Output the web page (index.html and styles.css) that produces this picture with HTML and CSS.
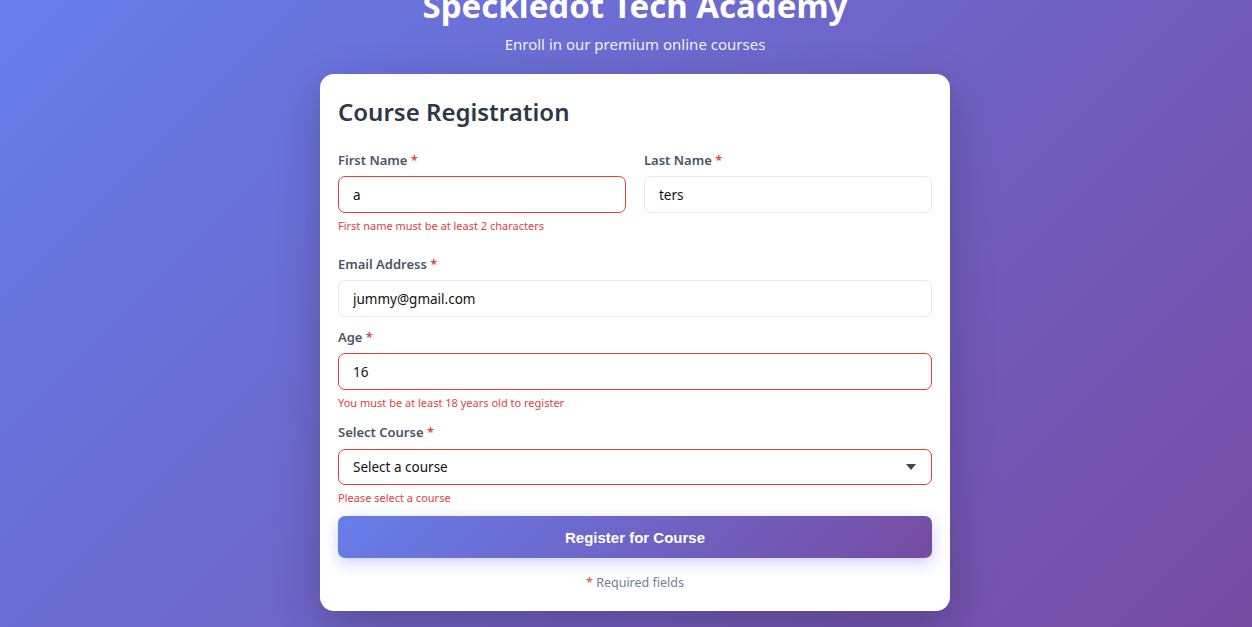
FILE: index.html
```html
<!DOCTYPE html>
<html lang="en">
<head>
<meta charset="utf-8">
<title>Speckledot Tech Academy</title>
<link rel="stylesheet" href="styles.css">
</head>
<body>
<div class="page">
  <header class="hero">
    <h1 class="hero-title">Speckledot Tech Academy</h1>
    <p class="hero-sub">Enroll in our premium online courses</p>
  </header>
  <main class="card">
    <h2 class="card-title">Course Registration</h2>
    <form class="form">
      <div class="form-row">
        <div class="field">
          <label class="label">First Name <span class="req">*</span></label>
          <input class="input input-error" type="text" value="a">
          <div class="error">First name must be at least 2 characters</div>
        </div>
        <div class="field">
          <label class="label">Last Name <span class="req">*</span></label>
          <input class="input" type="text" value="ters">
        </div>
      </div>
      <div class="field">
        <label class="label">Email Address <span class="req">*</span></label>
        <input class="input" type="email" value="jummy@gmail.com">
      </div>
      <div class="field">
        <label class="label">Age <span class="req">*</span></label>
        <input class="input input-error" type="text" value="16">
        <div class="error">You must be at least 18 years old to register</div>
      </div>
      <div class="field">
        <label class="label label-select">Select Course <span class="req">*</span></label>
        <div class="select-wrap">
          <select class="input select input-error">
            <option>Select a course</option>
          </select>
          <svg class="select-arrow" width="10" height="6" viewBox="0 0 10 6"><path d="M0 0h10L5 6z" fill="#444"/></svg>
        </div>
        <div class="error">Please select a course</div>
      </div>
      <button class="btn" type="button">Register for Course</button>
      <p class="note"><span class="req">*</span> Required fields</p>
    </form>
  </main>
</div>
</body>
</html>
```
FILE: styles.css
```css
* { box-sizing: border-box; }
html, body { margin: 0; padding: 0; }
body {
  font-family: "Noto Sans", "Open Sans", sans-serif;
  background: linear-gradient(135deg, #667eea 0%, #764ba2 100%);
  min-height: 627px;
  overflow: hidden;
}
.page {
  display: flex;
  flex-direction: column;
  align-items: center;
  margin-top: -16px;
  padding-left: 18px;
}
.hero { text-align: center; color: #fff; }
.hero-title {
  margin: 0;
  font-size: 33px;
  line-height: 44px;
  font-weight: 700;
}
.hero-sub {
  margin: 6px 0 0;
  font-size: 15px;
  line-height: 20px;
  color: rgba(255,255,255,0.92);
}
.card {
  margin-top: 20px;
  width: 630px;
  background: #fff;
  border-radius: 14px;
  padding: 22px 18px 19px;
  box-shadow: 0 15px 45px rgba(0,0,0,0.22);
}
.card-title {
  margin: 0 0 22px;
  font-size: 24px;
  line-height: 32px;
  font-weight: 600;
  color: #2d3748;
}
.form { display: flex; flex-direction: column; }
.form-row {
  display: grid;
  grid-template-columns: 1fr 1fr;
  gap: 18px;
  margin-bottom: 10px;
}
.field { display: flex; flex-direction: column; margin-bottom: 10px; }
.label {
  font-size: 13px;
  line-height: 20px;
  font-weight: 600;
  color: #4a5568;
  margin-bottom: 6px;
}
.label-select { margin-top: 1px; margin-bottom: 7px; }
.req { color: #e53e3e; }
.input {
  height: 37px;
  border: 1px solid #e2e8f0;
  border-radius: 7px;
  padding: 0 14px;
  font-family: inherit;
  font-size: 13.5px;
  color: #111;
  background: #fff;
  width: 100%;
}
.input-error { border-color: #e53e3e; }
.error {
  margin-top: 5px;
  font-size: 11px;
  line-height: 16px;
  color: #e53e3e;
}
.select-wrap { position: relative; }
.select { appearance: none; -webkit-appearance: none; display: block; height: 36px; }
.select-arrow { position: absolute; right: 16px; top: 15px; }
.btn {
  height: 42px;
  border: none;
  border-radius: 7px;
  background: linear-gradient(135deg, #667eea 0%, #764ba2 100%);
  color: #fff;
  font-family: "Liberation Sans", Arial, sans-serif;
  font-weight: 700;
  font-size: 15px;
  box-shadow: 0 5px 15px rgba(102,126,234,0.35);
}
.note {
  margin: 16px 0 0;
  text-align: center;
  font-size: 12.5px;
  line-height: 18px;
  color: #718096;
}
```
